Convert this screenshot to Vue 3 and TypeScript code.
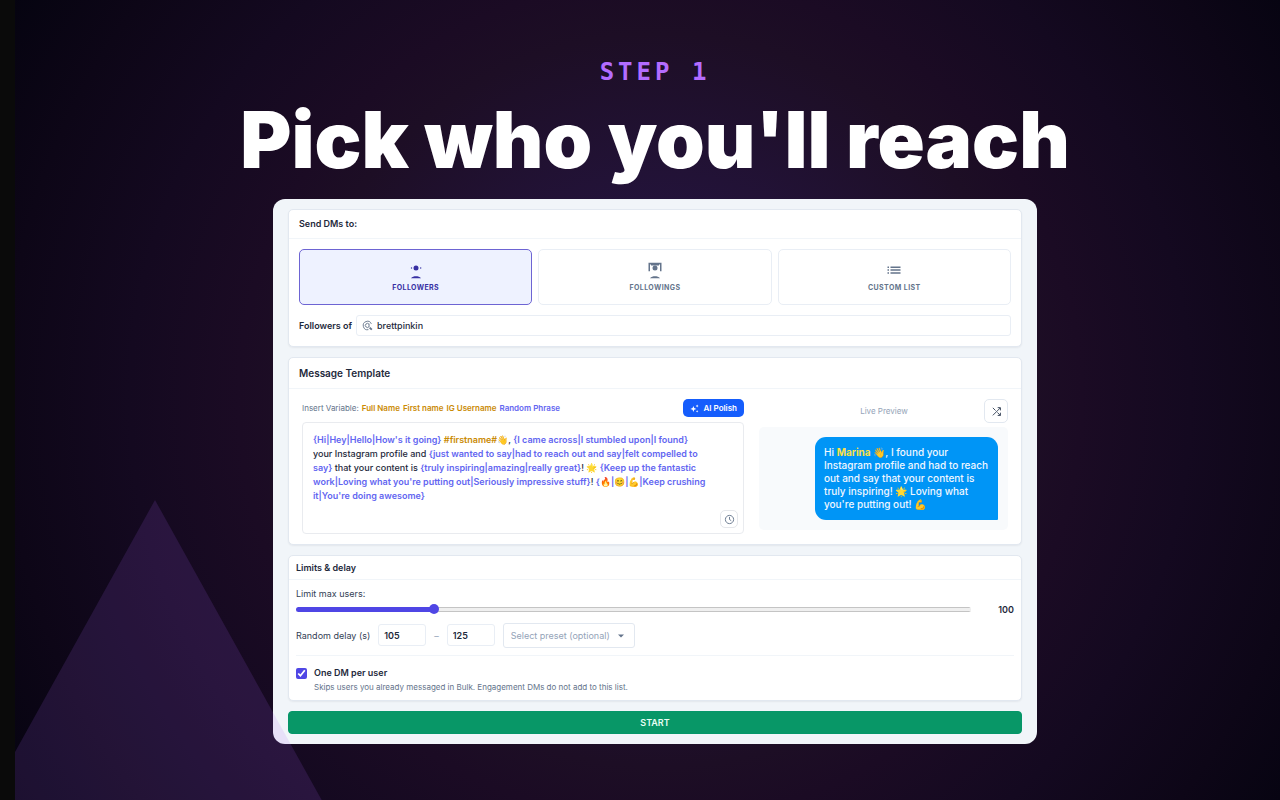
<script setup lang="ts">
import { ref, computed } from 'vue'

type Kind = 'text' | 'spin' | 'name'
interface Part { kind: Kind; text: string }

const audiences = [
  { id: 'followers', label: 'Followers' },
  { id: 'followings', label: 'Followings' },
  { id: 'custom', label: 'Custom list' },
]
const audience = ref('followers')
const username = ref('brettpinkin')
const limit = ref(100)
const limitMax = 500
const delayFrom = ref('105')
const delayTo = ref('125')
const onePerUser = ref(true)
const fill = computed(() => `${(limit.value / limitMax) * 100}%`)

const variables = [
  { label: 'Full Name', kind: 'name' },
  { label: 'First name', kind: 'name' },
  { label: 'IG Username', kind: 'name' },
  { label: 'Random Phrase', kind: 'spin' },
]

const templateLines: Part[][] = [
  [
    { kind: 'spin', text: "{Hi|Hey|Hello|How's it going}" },
    { kind: 'text', text: ' ' },
    { kind: 'name', text: '#firstname#' },
    { kind: 'text', text: '👋, ' },
    { kind: 'spin', text: '{I came across|I stumbled upon|I found}' },
  ],
  [
    { kind: 'text', text: 'your Instagram profile and ' },
    { kind: 'spin', text: '{just wanted to say|had to reach out and say|felt compelled to' },
  ],
  [
    { kind: 'spin', text: 'say}' },
    { kind: 'text', text: ' that your content is ' },
    { kind: 'spin', text: '{truly inspiring|amazing|really great}' },
    { kind: 'text', text: '! 🌟 ' },
    { kind: 'spin', text: '{Keep up the fantastic' },
  ],
  [
    { kind: 'spin', text: "work|Loving what you're putting out|Seriously impressive stuff}" },
    { kind: 'text', text: '! ' },
    { kind: 'spin', text: '{🔥|😊|💪|Keep crushing' },
  ],
  [{ kind: 'spin', text: "it|You're doing awesome}" }],
]
</script>

<template>
  <main class="stage">
    <div class="triangle"></div>
    <p class="step">STEP 1</p>
    <h1>Pick who you'll reach</h1>

    <form class="panel" @submit.prevent>
      <section class="card">
        <h2 class="head send-head">Send DMs to:</h2>
        <div class="send-body">
          <div class="choices">
            <button
              v-for="a in audiences"
              :key="a.id"
              type="button"
              class="choice"
              :class="{ active: audience === a.id }"
              @click="audience = a.id"
            >
              <svg v-if="a.id === 'followers'" viewBox="0 0 16 16" class="icon">
                <circle cx="8" cy="6" r="2.5" />
                <circle cx="3.5" cy="6" r="0.7" />
                <circle cx="12.7" cy="6" r="0.7" />
                <path d="M3 16.2C4.2 14.6 6 14.2 8 14.2s3.8.4 5 2z" />
              </svg>
              <svg v-else-if="a.id === 'followings'" viewBox="0 0 16 16" class="icon">
                <path d="M1.5 .8h13v8.400h-1.500V2.500H12v1H4v-1H3v6.700H1.500z" />
                <circle cx="8" cy="6" r="2.5" />
                <path d="M3 16.2C4.2 14.6 6 14.2 8 14.2s3.8.4 5 2z" />
              </svg>
              <svg v-else viewBox="0 0 16 16" class="icon">
                <path d="M1.5 4.500H3V6H1.500zM4.500 4.500h10V6h-10zM1.500 7.300H3v1.500H1.500zM4.500 7.300h10v1.500h-10zM1.500 10.200H3v1.500H1.500zM4.500 10.200h10v1.500h-10z" />
              </svg>
              <span>{{ a.label }}</span>
            </button>
          </div>
          <div class="user-row">
            <label for="user">Followers of</label>
            <div class="user-box">
              <svg viewBox="0 0 12 12" class="at">
                <path d="M10.200 4.200A4.600 4.600 0 1 0 7 10.500M7.600 4.600A2.200 2.200 0 1 0 7.700 7.200M7.700 4v3.500" />
                <path d="M8.300 8.300l2.400 2.200" class="thick" />
              </svg>
              <input id="user" v-model="username" type="text" />
            </div>
          </div>
        </div>
      </section>

      <section class="card">
        <h2 class="head message-head">Message Template</h2>
        <div class="message-body">
          <div class="editor-col">
            <div class="toolbar">
              <span class="hint">Insert Variable:</span>
              <button v-for="v in variables" :key="v.label" type="button" class="var" :class="v.kind">{{ v.label }}</button>
              <button type="button" class="polish">
                <svg viewBox="0 0 12 12">
                  <path d="M4.500 2.500l1.100 2.900 2.900 1.100-2.900 1.100-1.100 2.900-1.100-2.900L.5 6.500l2.900-1.100zM9.500.8l.6 1.300 1.300.6-1.300.6-.6 1.300-.6-1.300-1.300-.6 1.300-.6zM9.500 8l.5 1.200 1.200.5-1.200.5-.5 1.200-.5-1.200L7.800 9.700 9 9.200z" />
                </svg>
                AI Polish
              </button>
            </div>
            <div class="editor">
              <div class="template" contenteditable="true" role="textbox" aria-label="Message template" spellcheck="false">
                <div v-for="(line, n) in templateLines" :key="n"><span v-for="(p, i) in line" :key="i" :class="p.kind">{{ p.text }}</span></div>
              </div>
              <button type="button" class="clock" aria-label="History">
                <svg viewBox="0 0 12 12"><circle cx="6" cy="6" r="4.500" /><path d="M6 3.200V6l1.900 1.300" /></svg>
              </button>
            </div>
          </div>
          <div class="preview-col">
            <div class="preview-head">
              <span>Live Preview</span>
              <button type="button" class="shuffle" aria-label="Shuffle">
                <svg viewBox="0 0 12 12"><path d="M2 2l3 3M2 10.200l8-8M7 7l3 3.200M7.300 1.800h3v3M7.300 10.300h3v-3" /></svg>
              </button>
            </div>
            <div class="preview">
              <p class="bubble">Hi <b>Marina</b> 👋, I found your<br />Instagram profile and had to reach<br />out and say that your content is<br />truly inspiring! 🌟 Loving what<br />you're putting out! 💪</p>
            </div>
          </div>
        </div>
      </section>

      <section class="card">
        <h2 class="head limits-head">Limits &amp; delay</h2>
        <div class="limits-body">
          <label for="limit" class="limit-label">Limit max users:</label>
          <div class="limit-row">
            <input id="limit" v-model.number="limit" type="range" min="0" :max="limitMax" :style="{ '--fill': fill }" />
            <output for="limit">{{ limit }}</output>
          </div>
          <div class="delay-row">
            <label for="from">Random delay (s)</label>
            <input id="from" v-model="delayFrom" type="text" inputmode="numeric" />
            <span class="dash">–</span>
            <input v-model="delayTo" type="text" inputmode="numeric" aria-label="Random delay, upper bound" />
            <div class="preset">
              <select aria-label="Select preset">
                <option>Select preset (optional)</option>
              </select>
              <svg viewBox="0 0 8 8"><path d="M1 2.500h6L4 5.500z" /></svg>
            </div>
          </div>
          <div class="once">
            <input id="once" v-model="onePerUser" type="checkbox" />
            <div>
              <label for="once">One DM per user</label>
              <p>Skips users you already messaged in Bulk. Engagement DMs do not add to this list.</p>
            </div>
          </div>
        </div>
      </section>

      <button type="submit" class="start">START</button>
    </form>
  </main>
</template>

<style>
body {
  margin: 0;
  background: #0a0a0a;
}
</style>

<style scoped>
* {
  box-sizing: border-box;
}
.stage {
  position: relative;
  overflow: hidden;
  min-height: 100vh;
  margin-left: 15px;
  padding: 57px 0 56px 15px;
  display: flex;
  flex-direction: column;
  align-items: center;
  background: radial-gradient(circle 780px at 51% 50%, #24143a 0%, #23133a 25%, #1d0e25 47%, #1b0b24 54%, #140920 68%, #0d0617 84%, #04030f 100%);
  font-family: Inter, "Liberation Sans", sans-serif;
  color: #1e293b;
}
.triangle {
  position: absolute;
  z-index: 1;
  left: -60px;
  bottom: -60px;
  width: 400px;
  height: 360px;
  clip-path: polygon(50% 0, 100% 100%, 0 100%);
  background: rgba(168, 100, 250, 0.14);
  pointer-events: none;
}
.step {
  margin: 0;
  font: 700 24px/30px "DejaVu Sans Mono", monospace;
  letter-spacing: 4px;
  color: #b36cff;
}
h1 {
  margin: 3px 0 9px;
  font-size: 78px;
  line-height: 100px;
  font-weight: 900;
  color: #fff;
  white-space: nowrap;
}
h2,
p {
  margin: 0;
}
button,
input,
select {
  font-family: inherit;
}
button {
  cursor: pointer;
}
.panel {
  width: 764px;
  max-width: 100%;
  padding: 10px 15px;
  border-radius: 12px;
  background: #f1f5f9;
  display: flex;
  flex-direction: column;
  gap: 10px;
}
.card {
  background: #fff;
  border: 1px solid #e2e8f0;
  border-radius: 5px;
  box-shadow: 0 1px 2px rgba(15, 23, 42, 0.06);
}
.head {
  padding: 0 10px;
  border-bottom: 1px solid #f1f5f9;
  font-size: 9px;
  line-height: 28px;
  font-weight: 600;
}
.send-body {
  padding: 10px;
  display: flex;
  flex-direction: column;
  gap: 10px;
}
.choices {
  display: grid;
  grid-template-columns: repeat(3, 1fr);
  gap: 6px;
}
.choice {
  height: 56px;
  padding: 0;
  display: flex;
  flex-direction: column;
  align-items: center;
  justify-content: center;
  gap: 4px;
  border: 1px solid #e9eef5;
  border-radius: 5px;
  background: #fff;
  color: #64748b;
  font-size: 7px;
  line-height: 10px;
  font-weight: 700;
  letter-spacing: 0.06em;
  text-transform: uppercase;
}
.choice.active {
  background: #eef2ff;
  border-color: #6d64d3;
  color: #3730a3;
}
.icon {
  width: 16px;
  height: 18px;
  overflow: visible;
  fill: currentColor;
}
.user-row {
  display: flex;
  align-items: center;
  gap: 4px;
  font-size: 9px;
  font-weight: 600;
}
.user-box {
  flex: 1;
  height: 21px;
  display: flex;
  align-items: center;
  gap: 4px;
  padding: 0 5px;
  border: 1px solid #e9eef5;
  border-radius: 3px;
}
.user-box input {
  flex: 1;
  border: 0;
  padding: 0;
  outline: 0;
  background: none;
  font-size: 9px;
  font-weight: 500;
  color: #1e293b;
}
.at {
  width: 11px;
  height: 11px;
  fill: none;
  stroke: #64748b;
}
.thick {
  stroke-width: 2;
}
.message-head {
  font-size: 10px;
  line-height: 30px;
}
.message-body {
  display: grid;
  grid-template-columns: 442px 1fr;
  gap: 15px;
  padding: 10px 13px;
}
.toolbar {
  display: flex;
  align-items: center;
  gap: 3px;
  height: 18px;
  margin-bottom: 5px;
  font-size: 8px;
}
.hint {
  color: #64748b;
}
.var {
  border: 0;
  padding: 0;
  background: none;
  font-size: 8px;
  font-weight: 600;
}
.name {
  color: #ca8a04;
}
.spin {
  color: #6366f1;
}
.polish {
  margin-left: auto;
  height: 18px;
  display: flex;
  align-items: center;
  gap: 4px;
  padding: 0 7px;
  border: 0;
  border-radius: 5px;
  background: #155dfc;
  color: #fff;
  font-size: 8px;
  font-weight: 600;
}
.polish svg {
  width: 9px;
  height: 9px;
  fill: currentColor;
}
.editor {
  position: relative;
  height: 112px;
  padding: 10px;
  border: 1px solid #e9ebef;
  border-radius: 4px;
}
.template {
  outline: 0;
  font-size: 9px;
  line-height: 14px;
  font-weight: 600;
}
.template div {
  white-space: pre;
}
.template .text {
  font-weight: 500;
}
.clock {
  position: absolute;
  right: 5px;
  bottom: 5px;
  width: 18px;
  height: 18px;
  display: grid;
  place-items: center;
  padding: 0;
  border: 1px solid #e5e7eb;
  border-radius: 5px;
  background: #fff;
}
.clock svg {
  width: 11px;
  height: 11px;
  fill: none;
  stroke: #64748b;
}
.preview-head {
  display: grid;
  grid-template-columns: 1fr 24px;
  align-items: center;
  height: 24px;
  margin-bottom: 4px;
  padding-left: 25px;
  font-size: 8px;
  color: #94a3b8;
  text-align: center;
}
.shuffle {
  width: 24px;
  height: 24px;
  display: grid;
  place-items: center;
  padding: 0;
  border: 1px solid #e2e8f0;
  border-radius: 5px;
  background: #fff;
}
.shuffle svg {
  width: 11px;
  height: 11px;
  fill: none;
  stroke: #334155;
}
.preview {
  padding: 10px;
  display: flex;
  justify-content: flex-end;
  border-radius: 5px;
  background: #f8fafc;
}
.bubble {
  padding: 9px;
  min-width: 183px;
  border-radius: 11px 11px 1px 11px;
  background: #0095f6;
  color: #f0f7ff;
  font-size: 10px;
  line-height: 13px;
  font-weight: 500;
  white-space: nowrap;
}
.bubble b {
  color: #fde047;
  font-weight: 700;
}
.limits-head {
  padding: 0 7px;
  line-height: 23px;
}
.limits-body {
  padding: 7px 7px 5px;
  font-size: 9px;
  color: #334155;
}
.limit-label {
  display: block;
  line-height: 14px;
}
.limit-row {
  display: flex;
  align-items: center;
  height: 16px;
}
.limit-row input {
  appearance: none;
  flex: 1;
  height: 10px;
  margin: 0;
  background: none;
}
.limit-row input::-webkit-slider-runnable-track {
  height: 5px;
  border-radius: 3px;
  background:
    linear-gradient(#4f46e5, #4f46e5) 0 0 / var(--fill) 100% no-repeat,
    linear-gradient(#efefef, #efefef) 0 1px / 100% 3px no-repeat,
    #c4c4c4;
}
.limit-row input::-webkit-slider-thumb {
  appearance: none;
  width: 10px;
  height: 10px;
  margin-top: -3px;
  border-radius: 50%;
  background: #4f46e5;
}
output {
  width: 43px;
  text-align: right;
  font-weight: 600;
  color: #1e293b;
}
.delay-row {
  display: flex;
  align-items: center;
  gap: 8px;
  height: 26px;
  margin: 5px 0 7px;
}
.delay-row input {
  width: 48px;
  height: 22px;
  padding: 0 5px;
  border: 1px solid #e9eef5;
  border-radius: 3px;
  font-size: 9px;
  font-weight: 600;
  color: #1e293b;
}
.dash {
  color: #94a3b8;
}
.preset {
  position: relative;
}
.preset select {
  appearance: none;
  display: block;
  width: 132px;
  height: 25px;
  padding: 0 7px;
  border: 1px solid #e2e8f0;
  border-radius: 3px;
  background: #fff;
  color: #94a3b8;
  font-size: 9px;
}
.preset svg {
  position: absolute;
  right: 10px;
  top: 9px;
  width: 8px;
  height: 8px;
  fill: #64748b;
  pointer-events: none;
}
.once {
  display: flex;
  gap: 7px;
  padding: 10px 0 1px;
  border-top: 1px solid #f1f5f9;
  font-size: 9px;
  line-height: 14px;
}
.once input {
  width: 11px;
  height: 11px;
  margin: 2px 0 0;
  accent-color: #4f46e5;
}
.once label {
  display: block;
  font-weight: 600;
  color: #1e293b;
}
.once p {
  font-size: 8px;
  color: #64748b;
}
.start {
  height: 23px;
  padding: 0;
  border: 1px solid #059669;
  border-radius: 4px;
  background: #089767;
  color: #e8fff5;
  font-size: 9px;
  font-weight: 600;
}
</style>
